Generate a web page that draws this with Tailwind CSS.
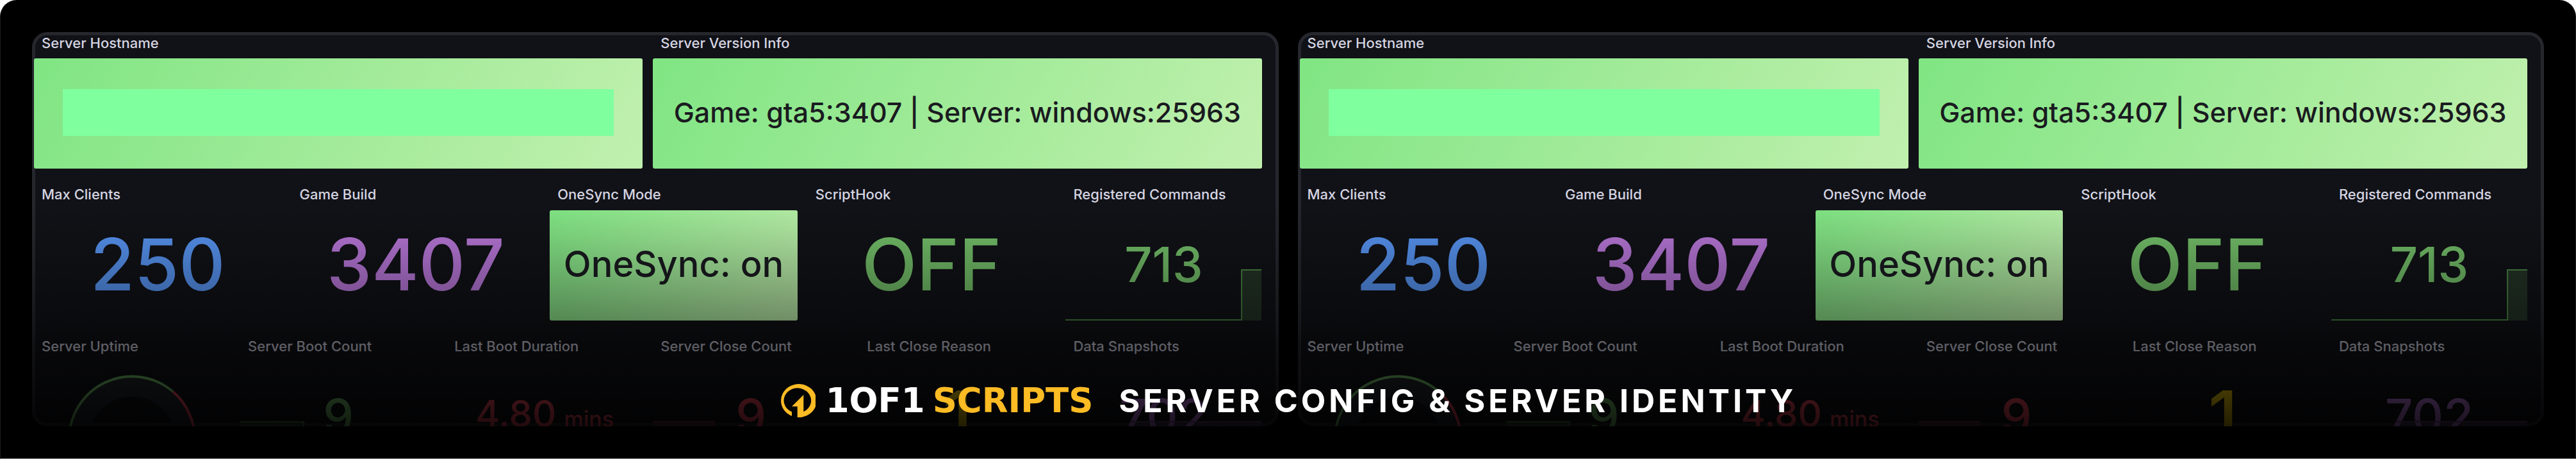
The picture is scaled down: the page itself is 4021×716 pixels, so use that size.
<!DOCTYPE html>
<html lang="en">
<head>
    <meta charset="UTF-8">
    <meta content="width=device-width, initial-scale=1.0" name="viewport">
    <title>1OF1 Scripts - Server Config &amp; Server Identity</title>
    <script src="https://cdn.jsdelivr.net/npm/@tailwindcss/browser@4"></script>
</head>
<body class="bg-white font-['Inter',sans-serif]">
<main class="relative h-screen overflow-hidden rounded-t-[26px] border-x border-b border-x-[#1c1c1c] border-b-[#8c8c8c] bg-black px-[49px] py-[50px]">
    <div class="grid h-full grid-cols-2 gap-[30px]" id="boards"></div>

    <!-- Fade to black towards the bottom -->
    <div class="absolute inset-x-0 top-[316px] bottom-0 bg-[linear-gradient(to_bottom,transparent_0%,rgba(0,0,0,0.12)_15%,rgba(0,0,0,0.4)_45%,rgba(0,0,0,0.56)_56%,rgba(0,0,0,0.86)_88%,black_100%)]"></div>

    <!-- Banner -->
    <div class="absolute inset-x-0 top-[595px] flex h-[60px] items-center justify-center text-[50px] leading-[60px] font-bold text-white">
        <svg class="mr-4 h-[52px] w-[56px]" viewBox="0 0 56 52" fill="#fdbb24">
            <path d="M27.7 52V35H19L37.3 17V43.3A21.3 19.5 0 1 0 19 43.6V50A27.8 26 0 1 1 27.7 52Z"/>
        </svg>
        <div class="flex gap-3 font-['DejaVu_Sans',sans-serif] text-[53px]">
            <span>1OF1</span>
            <span class="text-[#fdbb24]">SCRIPTS</span>
        </div>
        <h1 class="ml-10 tracking-widest">SERVER CONFIG &amp; SERVER IDENTITY</h1>
    </div>
</main>

<template id="board">
    <section class="overflow-hidden rounded-[24px] bg-[#111217] pt-[5px] pr-[26px] pl-[3px] shadow-[inset_0_0_0_5px_#26272d]">
        <div class="grid grid-cols-24 gap-4 text-[22px] leading-6 font-medium text-[#d5d5e2]">
            <article class="col-span-12">
                <h2 class="h-9 pl-3">Server Hostname</h2>
                <div class="flex h-[172px] items-center rounded-[3px] bg-[linear-gradient(120deg,#80e583,#c1f0ae)] px-[45px] pb-1">
                    <div class="h-[73px] w-full bg-[#80ff9f]"></div>
                </div>
            </article>
            <article class="col-span-12">
                <h2 class="h-9 pl-3">Server Version Info</h2>
                <div class="flex h-[172px] items-center justify-center rounded-[3px] bg-[linear-gradient(120deg,#80e583,#c1f0ae)] pb-1 text-[43px] whitespace-nowrap text-[#1a1b20]">Game: gta5:3407 | Server: windows:25963</div>
            </article>

            <article class="col-span-5">
                <h2 class="h-[49px] pt-3 pl-3">Max Clients</h2>
                <div class="flex h-[172px] items-center justify-center pb-1 text-[112px] text-[#5794f2]">250</div>
            </article>
            <article class="col-span-5">
                <h2 class="h-[49px] pt-3 pl-3">Game Build</h2>
                <div class="flex h-[172px] items-center justify-center pb-1 text-[112px] text-[#b877d9]">3407</div>
            </article>
            <article class="col-span-5">
                <h2 class="h-[49px] pt-3 pl-3">OneSync Mode</h2>
                <div class="flex h-[172px] items-center justify-center rounded-[3px] bg-[linear-gradient(120deg,#80e583,#c1f0ae)] pb-1 text-[56px] whitespace-nowrap text-[#1a1b20]">OneSync: on</div>
            </article>
            <article class="col-span-5">
                <h2 class="h-[49px] pt-3 pl-3">ScriptHook</h2>
                <div class="flex h-[172px] items-center justify-center pb-1 text-[112px] text-[#73bf69]">OFF</div>
            </article>
            <article class="col-span-4">
                <h2 class="h-[49px] pt-3 pl-3">Registered Commands</h2>
                <div class="relative flex h-[172px] items-center justify-center pb-1 text-[76px] text-[#73bf69]">
                    <svg class="absolute inset-0 h-full w-full" viewBox="0 0 306 172" preserveAspectRatio="none" stroke="#4a8745" stroke-width="2">
                        <path d="M275 93H306V172H275Z" fill="#73bf69" fill-opacity="0.2" stroke="none"/>
                        <path d="M0 171H275V93H306" fill="none"/>
                    </svg>
                    713
                </div>
            </article>

            <article class="col-span-4">
                <h2 class="h-[49px] pt-3 pl-3">Server Uptime</h2>
                <div class="flex h-[172px] justify-center">
                    <svg class="mt-5 h-[200px] w-[200px] shrink-0" viewBox="0 0 200 200" fill="none">
                        <circle cx="100" cy="100" r="81" stroke="#22252b" stroke-width="29"/>
                        <path d="M2 100A98 98 0 0 1 164 26" stroke="#73bf69" stroke-width="4"/>
                        <path d="M164 26A98 98 0 0 1 198 100" stroke="#f2495c" stroke-width="4"/>
                    </svg>
                </div>
            </article>
            <article class="col-span-4">
                <h2 class="h-[49px] pt-3 pl-3">Server Boot Count</h2>
                <div class="relative flex h-[172px] items-center justify-center pb-1 text-[76px] text-[#73bf69]">
                    <div class="absolute top-[92px] left-0 h-[80px] w-[100px] border-t-2 border-r-2 border-[#4a8745] bg-[#73bf69]/20"></div>
                    9
                </div>
            </article>
            <article class="col-span-4">
                <h2 class="h-[49px] pt-3 pl-3">Last Boot Duration</h2>
                <div class="flex h-[172px] items-center justify-center pb-1">
                    <div class="flex items-baseline gap-3 text-[58px] text-[#f2495c]">4.80 <span class="text-[34px]">mins</span></div>
                </div>
            </article>
            <article class="col-span-4">
                <h2 class="h-[49px] pt-3 pl-3">Server Close Count</h2>
                <div class="relative flex h-[172px] items-center justify-center pb-1 text-[76px] text-[#f2495c]">
                    <div class="absolute top-[92px] left-0 h-[80px] w-[96px] border-t-2 border-r-2 border-[#8a2f3b] bg-[#f2495c]/20"></div>
                    9
                </div>
            </article>
            <article class="col-span-4">
                <h2 class="h-[49px] pt-3 pl-3">Last Close Reason</h2>
                <div class="flex h-[172px] items-center justify-center pb-1 text-[112px] text-[#f2cc0c]">1</div>
            </article>
            <article class="col-span-4">
                <h2 class="h-[49px] pt-3 pl-3">Data Snapshots</h2>
                <div class="relative flex h-[172px] items-center justify-center pb-1 text-[76px] text-[#b877d9]">
                    <div class="absolute top-[92px] right-0 h-[80px] w-[206px] border-t-2 border-[#6d4880] bg-[#b877d9]/20"></div>
                    702
                </div>
            </article>
        </div>
    </section>
</template>

<script>
    const boards = document.getElementById('boards');
    const board = document.getElementById('board');

    // The same board is shown twice, side by side
    for (let i = 0; i < 2; i++) {
        boards.appendChild(board.content.cloneNode(true));
    }
</script>
</body>
</html>
